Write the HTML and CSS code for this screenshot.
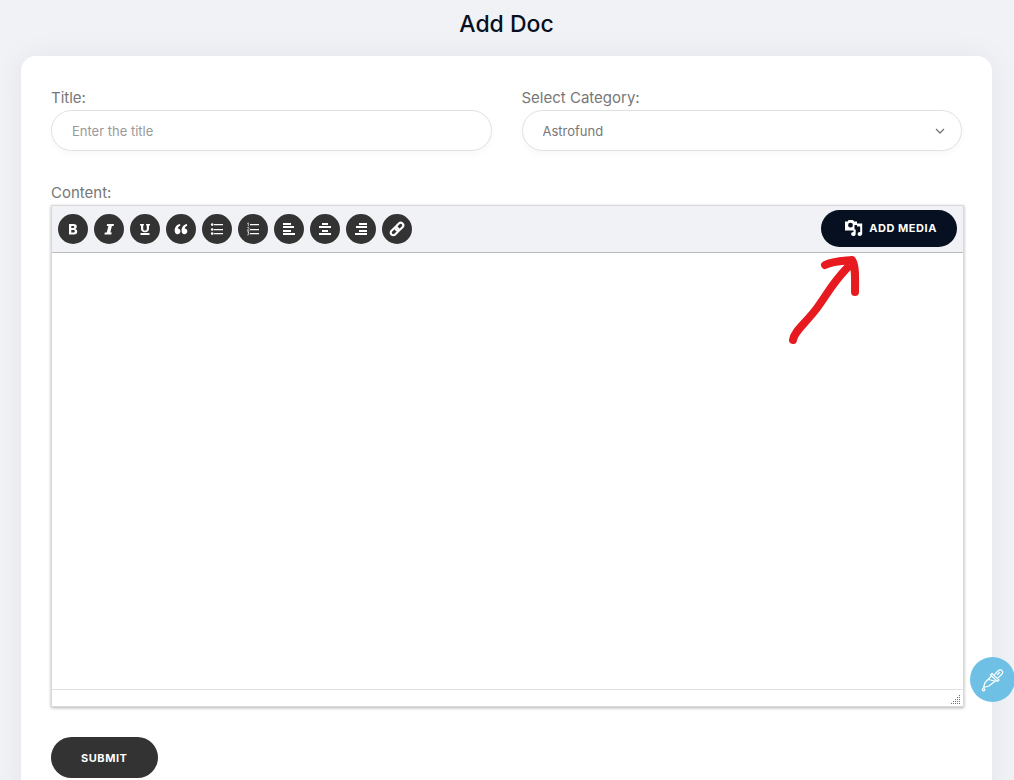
FILE: index.html
```html
<!DOCTYPE html>
<html lang="en">
<head>
<meta charset="utf-8">
<meta name="viewport" content="width=device-width, initial-scale=1">
<title>Add Doc</title>
<link rel="stylesheet" href="styles.css">
</head>
<body>
<main class="page">
  <h1 class="page-title">Add Doc</h1>
  <form class="card">
    <div class="fields">
      <div class="field">
        <label class="label" for="title">Title:</label>
        <input class="control" id="title" type="text" placeholder="Enter the title">
      </div>
      <div class="field">
        <label class="label" for="category">Select Category:</label>
        <div class="select-wrap">
          <select class="control select" id="category"><option>Astrofund</option></select>
          <svg class="chevron" viewBox="0 0 10 6" aria-hidden="true"><path d="M1 1l4 4 4-4"/></svg>
        </div>
      </div>
    </div>
    <div class="field">
      <label class="label" for="content">Content:</label>
      <div class="editor">
        <div class="toolbar">
          <div class="tools">
            <button class="tool" type="button" aria-label="Bold"><svg viewBox="0 0 14 14"><path fill-rule="evenodd" d="M3 2h4.800q3 0 3 2.800 0 1.600-1.300 2.200 1.800.6 1.800 2.600 0 2.900-3.300 2.900H3zM5.300 3.900v2.200h1.900q1.100 0 1.100-1.100t-1.100-1.100zM5.300 7.900v2.600h2.200q1.300 0 1.300-1.300t-1.300-1.300z"/></svg></button>
            <button class="tool" type="button" aria-label="Italic"><svg viewBox="0 0 14 14"><path d="M5.200 2H12l-.5 1.900H9.900L8.300 10.600h1.500L9.300 12.500H2.400l.5-1.900h1.900L6.400 3.900H4.700z"/></svg></button>
            <button class="tool" type="button" aria-label="Underline"><svg viewBox="0 0 14 14"><path d="M2 2h3.900v1.400h-.7v3.300c0 1.300.6 1.800 1.800 1.800s1.800-.5 1.800-1.800V3.400h-.7V2H12v1.400h-1v3.400c0 2.300-1.500 3.500-4 3.500S3 9.100 3 6.800V3.400H2zM2.500 11h9v2h-9z"/></svg></button>
            <button class="tool" type="button" aria-label="Quote"><svg viewBox="0 0 14 14"><path d="M6 2C3 2.500.7 4.800.7 8.400c0 2.400 1 3.800 2.900 3.800 1.600 0 2.800-1.200 2.800-2.900S5.300 6.600 3.900 6.600c.1-1.500 1-2.300 2.400-2.800zM12.900 2C9.900 2.500 7.600 4.800 7.600 8.400c0 2.400 1 3.800 2.900 3.800 1.600 0 2.800-1.200 2.800-2.900s-1.100-2.700-2.500-2.700c.1-1.500 1-2.300 2.400-2.800z"/></svg></button>
            <button class="tool" type="button" aria-label="Bulleted list"><svg viewBox="0 0 14 14"><path d="M4 2h9v1.200H4zM4 7h9v1.200H4zM4 11h9v1.200H4z"/><circle cx="2.200" cy="2.600" r="1.300"/><circle cx="2.200" cy="7.500" r="1.300"/><circle cx="2.200" cy="11.600" r="1.300"/></svg></button>
            <button class="tool" type="button" aria-label="Numbered list"><svg viewBox="0 0 14 14"><path d="M4 2h9v1.200H4zM4 7h9v1.200H4zM4 11h9v1.200H4z"/><path class="fine" d="M1.300 1.500l1-.6v3.200M1.200 5.800c1.800-1 2.600.2 1.300 1.300L1.300 8.300h2M1.200 9.800h1.900L2 11.100c1.800.2 1.300 2-.8 1.700"/></svg></button>
            <button class="tool" type="button" aria-label="Align left"><svg viewBox="0 0 14 14"><path d="M1 1h8v2H1zM1 4h11v2H1zM1 8h8v2H1zM1 11h12v2H1z"/></svg></button>
            <button class="tool" type="button" aria-label="Align center"><svg viewBox="0 0 14 14"><path d="M4 1h6v2H4zM1 4h12v2H1zM4 8h6v2H4zM1 11h12v2H1z"/></svg></button>
            <button class="tool" type="button" aria-label="Align right"><svg viewBox="0 0 14 14"><path d="M5 1h8v2H5zM2 4h11v2H2zM5 8h8v2H5zM1 11h12v2H1z"/></svg></button>
            <button class="tool" type="button" aria-label="Link"><svg class="link" viewBox="0 0 14 14"><g transform="rotate(-45 7 7)"><rect x="-.8" y="4.400" width="9" height="5.200" rx="2.600"/><rect x="5.800" y="4.400" width="9" height="5.200" rx="2.600"/></g></svg></button>
          </div>
          <button class="media" type="button">
            <svg viewBox="0 0 18 18" aria-hidden="true"><path fill-rule="evenodd" d="M0 2.500h2.600L3.500 1h4.600L9 2.500h3V6H9.500v5.500H0zM5.500 3.800a2.400 2.400 0 1 0 0 4.800 2.400 2.400 0 0 0 0-4.800z"/><path d="M12 4.500h5.200v9.700c0 1.700-1 2.800-2.400 2.800-1.300 0-2.200-.8-2.200-2s1-2 2.200-2h.4V7.500H12z"/><path d="M10.700 10.500v4.200c0 1.500-1 2.300-2.400 2.300-1.300 0-2.200-.8-2.200-2s1-2 2.200-2h.2v-2.500z"/></svg>
            Add Media
          </button>
        </div>
        <textarea class="content" id="content"></textarea>
        <div class="statusbar">
          <svg class="grip" viewBox="0 0 10 10" aria-hidden="true"><path d="M0 9.500h10M2 7.500h8M4 5.500h6M6 3.500h4M8 1.500h2"/></svg>
        </div>
        <svg class="arrow" viewBox="0 0 72 92" aria-hidden="true"><path d="M5 84C6 75 18 67 29 52C40 37 43 29 59 12M37 9C45 5 54 5 64 4C68 10 67 23 67 36"/></svg>
      </div>
    </div>
    <button class="submit" type="submit">Submit</button>
  </form>
</main>
<button class="picker" type="button" aria-label="Color picker"><svg viewBox="0 0 24 24"><path d="M13.500 6.500l4-4c2.500-2 5.500 1 3.500 3.500l-4.500 4.500M11 5.500l7 6.500-1.500 1.500-7-6.500zM10.500 8L4 14.500l-1.500 5L8 18l7-5.500M7.500 11.500l6 1.500M2.500 20.500a1.200 1.200 0 1 0 .1 0M16 7l3-3"/></svg></button>
</body>
</html>
```
FILE: styles.css
```css
* { box-sizing: border-box; }

body {
  margin: 0;
  height: 100vh;
  overflow: hidden;
  background: #f1f2f6;
  color: #777;
  font-family: Inter, "Liberation Sans", sans-serif;
  font-size: 15px;
  line-height: 24px;
}

button, input, select, textarea { font: inherit; }
button { cursor: pointer; border: 0; }

.page { padding: 8px 22px 0 21px; }

.page-title {
  margin: 0 0 16px;
  color: #061020;
  font-size: 23px;
  font-weight: 500;
  line-height: 32px;
  text-align: center;
}

.card {
  padding: 30px;
  border-radius: 15px;
  background: #fff;
  box-shadow: 0 0 30px rgba(10, 40, 70, .06);
}

.fields {
  display: grid;
  grid-template-columns: 1fr 1fr;
  gap: 30px;
  margin-bottom: 30px;
}

.label { display: block; }

.control {
  display: block;
  width: 100%;
  height: 41px;
  padding: 0 20px;
  border: 1px solid #e1e1e1;
  border-radius: 21px;
  outline: 0;
  background: #fff;
  box-shadow: 0 3px 6px rgba(0, 0, 0, .03);
  color: #777;
  font-size: 13px;
}
.control::placeholder { color: #999; opacity: 1; }

.select-wrap { position: relative; }
.select { appearance: none; }

.chevron {
  position: absolute;
  top: 18px;
  right: 17px;
  width: 10px;
  height: 6px;
  fill: none;
  stroke: #777;
  stroke-width: 1.3;
  pointer-events: none;
}

.editor {
  position: relative;
  margin: 0 -2px 30px 0;
  border: 1px solid #d9d9d9;
  box-shadow: 0 1px 3px rgba(0, 0, 0, .3);
}

.toolbar {
  display: flex;
  align-items: center;
  justify-content: space-between;
  height: 47px;
  padding: 0 6px;
  border-bottom: 1px solid #bbb;
  background: #f1f2f6;
}

.tools { display: flex; gap: 6px; }

.tool {
  display: grid;
  place-items: center;
  width: 30px;
  height: 30px;
  padding: 0;
  border-radius: 50%;
  background: #333;
}
.tool svg { width: 14px; height: 14px; fill: #fff; overflow: visible; }
.tool .fine { fill: none; stroke: #fff; stroke-width: .7; }
.tool .link { fill: none; stroke: #fff; stroke-width: 2.1; }

.media {
  display: flex;
  align-items: center;
  gap: 6px;
  height: 37px;
  margin-bottom: 2px;
  padding: 0 20px 0 24px;
  border-radius: 19px;
  background: #061020;
}
.media svg { width: 18px; height: 18px; fill: #fff; }

.media, .submit {
  color: #fff;
  font-size: 11px;
  font-weight: 700;
  letter-spacing: .05em;
  text-transform: uppercase;
}

.content {
  display: block;
  width: 100%;
  height: 436px;
  padding: 10px;
  border: 0;
  outline: 0;
  resize: none;
  background: #fff;
}

.statusbar {
  display: flex;
  align-items: flex-end;
  justify-content: flex-end;
  height: 17px;
  padding: 2px;
  border-top: 1px solid #e1e1e1;
}
.grip {
  width: 10px;
  height: 10px;
  stroke: #4b8a4b;
  stroke-width: 1;
  stroke-dasharray: 1 1;
}

.arrow {
  position: absolute;
  top: 50px;
  right: 103px;
  width: 72px;
  height: 92px;
  fill: none;
  stroke: #e71b1f;
  stroke-width: 8;
  stroke-linecap: round;
  stroke-linejoin: round;
  pointer-events: none;
}

.submit {
  height: 41px;
  padding: 0 30px;
  border-radius: 21px;
  background: #333;
}

.picker {
  position: fixed;
  right: -1px;
  bottom: 78px;
  display: grid;
  place-items: center;
  width: 45px;
  height: 45px;
  padding: 0;
  border-radius: 50%;
  background: #6ec0e5;
}
.picker svg { width: 24px; height: 24px; fill: none; stroke: #fff; stroke-width: 1.2; }
```
